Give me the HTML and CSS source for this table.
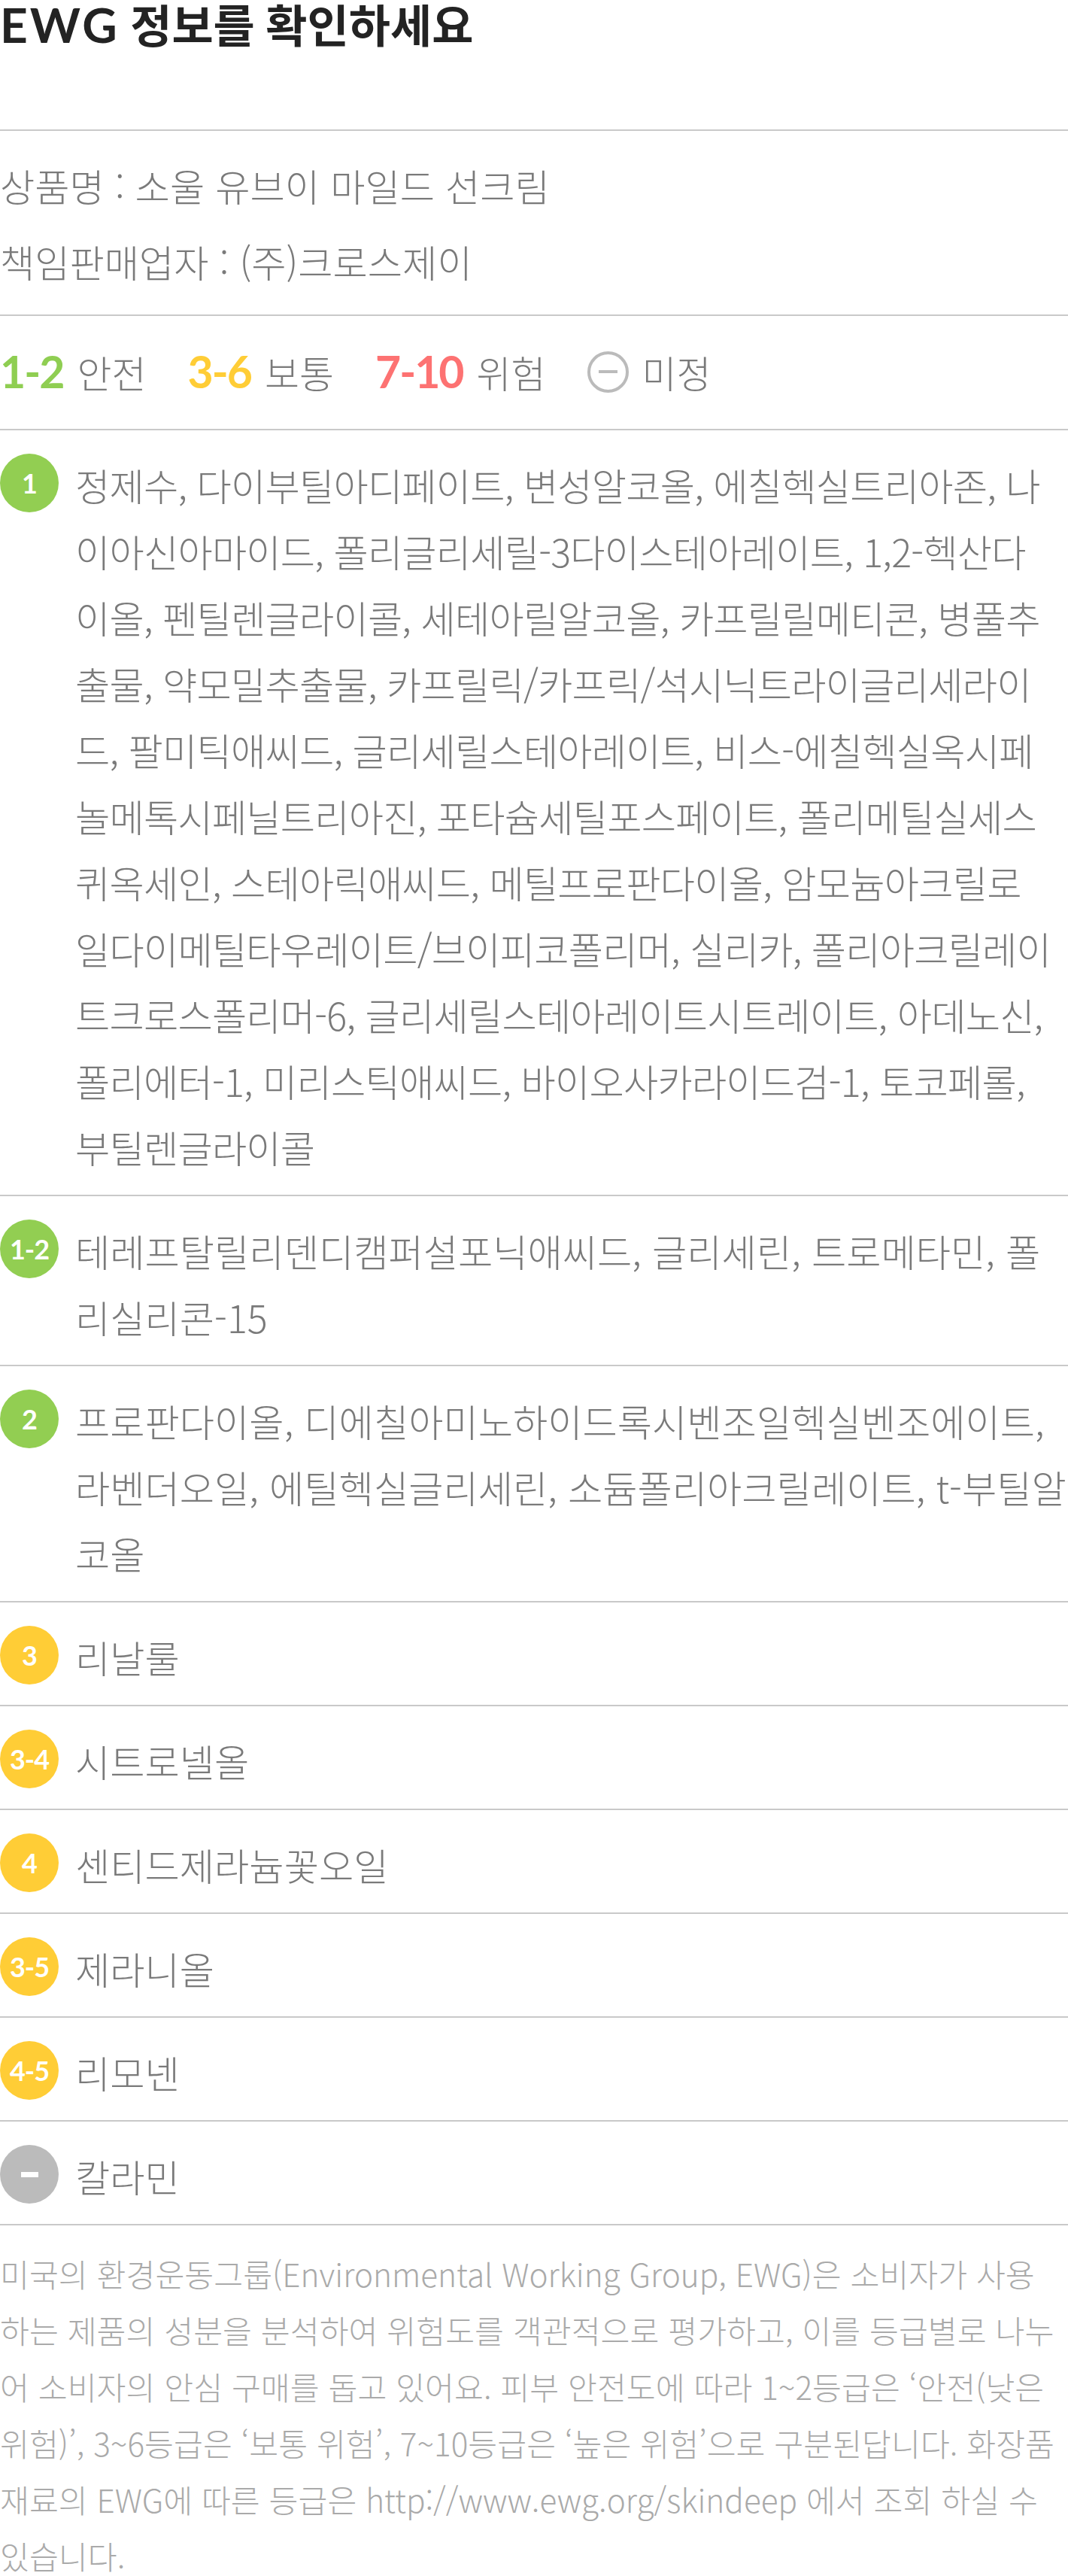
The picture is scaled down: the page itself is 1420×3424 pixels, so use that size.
FILE: index.html
```html
<!DOCTYPE html>
<html lang="ko">
<head>
<meta charset="utf-8">
<title>EWG 정보를 확인하세요</title>
<link rel="stylesheet" href="styles.css">
</head>
<body>
<div class="page">
  <h1 class="title"><span class="title-en">EWG</span> 정보를 확인하세요</h1>

  <section class="info">
    <p>상품명 : 소울 유브이 마일드 선크림</p>
    <p>책임판매업자 : (주)크로스제이</p>
  </section>

  <section class="legend">
    <span class="legend-item"><b class="num c-green">1-2</b>안전</span>
    <span class="legend-item"><b class="num c-yellow">3-6</b>보통</span>
    <span class="legend-item"><b class="num c-red">7-10</b>위험</span>
    <span class="legend-item legend-item-none"><span class="legend-none"><span class="legend-none-bar"></span></span>미정</span>
  </section>

  <ul class="ingredients">
    <li class="row">
      <span class="badge bg-green">1</span>
      <p class="names names-long">정제수, 다이부틸아디페이트, 변성알코올, 에칠헥실트리아존, 나<br>이아신아마이드, 폴리글리세릴-3다이스테아레이트, 1,2-헥산다<br>이올, 펜틸렌글라이콜, 세테아릴알코올, 카프릴릴메티콘, 병풀추<br>출물, 약모밀추출물, 카프릴릭/카프릭/석시닉트라이글리세라이<br>드, 팔미틱애씨드, 글리세릴스테아레이트, 비스-에칠헥실옥시페<br>놀메톡시페닐트리아진, 포타슘세틸포스페이트, 폴리메틸실세스<br>퀴옥세인, 스테아릭애씨드, 메틸프로판다이올, 암모늄아크릴로<br>일다이메틸타우레이트/브이피코폴리머, 실리카, 폴리아크릴레이<br>트크로스폴리머-6, 글리세릴스테아레이트시트레이트, 아데노신,<br>폴리에터-1, 미리스틱애씨드, 바이오사카라이드검-1, 토코페롤,<br>부틸렌글라이콜</p>
    </li>
    <li class="row">
      <span class="badge bg-green">1-2</span>
      <p class="names">테레프탈릴리덴디캠퍼설포닉애씨드, 글리세린, 트로메타민, 폴리실리콘-15</p>
    </li>
    <li class="row">
      <span class="badge bg-green">2</span>
      <p class="names">프로판다이올, 디에칠아미노하이드록시벤조일헥실벤조에이트, 라벤더오일, 에틸헥실글리세린, 소듐폴리아크릴레이트, t-부틸알코올</p>
    </li>
    <li class="row">
      <span class="badge bg-yellow">3</span>
      <p class="names">리날룰</p>
    </li>
    <li class="row">
      <span class="badge bg-yellow">3-4</span>
      <p class="names">시트로넬올</p>
    </li>
    <li class="row">
      <span class="badge bg-yellow">4</span>
      <p class="names">센티드제라늄꽃오일</p>
    </li>
    <li class="row">
      <span class="badge bg-yellow">3-5</span>
      <p class="names">제라니올</p>
    </li>
    <li class="row">
      <span class="badge bg-yellow">4-5</span>
      <p class="names">리모넨</p>
    </li>
    <li class="row">
      <span class="badge bg-gray"><span class="badge-bar"></span></span>
      <p class="names">칼라민</p>
    </li>
  </ul>

  <p class="note">미국의 환경운동그룹(Environmental Working Group, EWG)은 소비자가 사용하는 제품의 성분을 분석하여 위험도를 객관적으로 평가하고, 이를 등급별로 나누어 소비자의 안심 구매를 돕고 있어요. 피부 안전도에 따라 1~2등급은 ‘안전(낮은 위험)’, 3~6등급은 ‘보통 위험’, 7~10등급은 ‘높은 위험’으로 구분된답니다. 화장품 재료의 EWG에 따른 등급은 http://www.ewg.org/skindeep 에서 조회 하실 수 있습니다.</p>
</div>
</body>
</html>
```

FILE: styles.css
```css
html, body {
  margin: 0;
  padding: 0;
  background: #ffffff;
}

.page {
  width: 1420px;
  font-family: "Noto Sans CJK KR", "Noto Sans", sans-serif;
  font-weight: 300;
  color: #7a7a7a;
}

.title {
  margin: 0 0 105px;
  font-family: "Lato", "Noto Sans CJK KR", sans-serif;
  font-weight: 700;
  font-size: 60px;
  line-height: 66px;
  letter-spacing: 0;
  color: #232323;
}

.title-en {
  font-size: 64px;
  letter-spacing: 3px;
}

.info {
  border-top: 2px solid #c9c9c9;
  padding: 28px 0 27px;
}

.info p {
  margin: 0;
  font-size: 50.3px;
  line-height: 88px;
}

.info p + p {
  margin-top: 13px;
}

.legend {
  border-top: 2px solid #c9c9c9;
  padding: 30px 0 32px;
  display: flex;
  align-items: center;
  gap: 55px;
  font-size: 50px;
  line-height: 88px;
}

.legend-item {
  display: inline-flex;
  align-items: baseline;
  gap: 18px;
}

.legend-item-none {
  align-items: center;
}

.num {
  font-family: "Lato", sans-serif;
  font-weight: 700;
  font-size: 59px;
  letter-spacing: -2px;
}

.c-green { color: #8fce52; }
.c-yellow { color: #ffcd36; }
.c-red { color: #fd7272; }

.legend-none {
  width: 55px;
  height: 55px;
  box-sizing: border-box;
  border: 4px solid #bbbbbb;
  border-radius: 50%;
  display: flex;
  align-items: center;
  justify-content: center;
}

.legend-none-bar {
  width: 25px;
  height: 4px;
  background: #bbbbbb;
}

.ingredients {
  list-style: none;
  margin: 0;
  padding: 0;
}

.row {
  display: flex;
  align-items: flex-start;
  border-top: 2px solid #c9c9c9;
  padding: 28px 0 20px;
}

.badge {
  flex: 0 0 78px;
  height: 78px;
  margin-top: 3px;
  margin-right: 22px;
  border-radius: 50%;
  display: flex;
  align-items: center;
  justify-content: center;
  font-family: "Lato", sans-serif;
  font-weight: 700;
  font-size: 36px;
  letter-spacing: -1px;
  color: #ffffff;
}

.bg-green { background: #92ce52; }
.bg-yellow { background: #ffcd36; }
.bg-gray { background: #bbbbbb; }

.badge-bar {
  width: 23px;
  height: 7px;
  background: #ffffff;
}

.names {
  flex: 1;
  min-width: 0;
  margin: 0;
  font-size: 50.3px;
  line-height: 88px;
}

.names-long {
  white-space: nowrap;
  letter-spacing: -0.8px;
}

.note {
  margin: 0;
  border-top: 2px solid #c9c9c9;
  padding: 26px 10px 0 0;
  font-size: 42.3px;
  line-height: 75px;
  color: #aaaaaa;
}
```
